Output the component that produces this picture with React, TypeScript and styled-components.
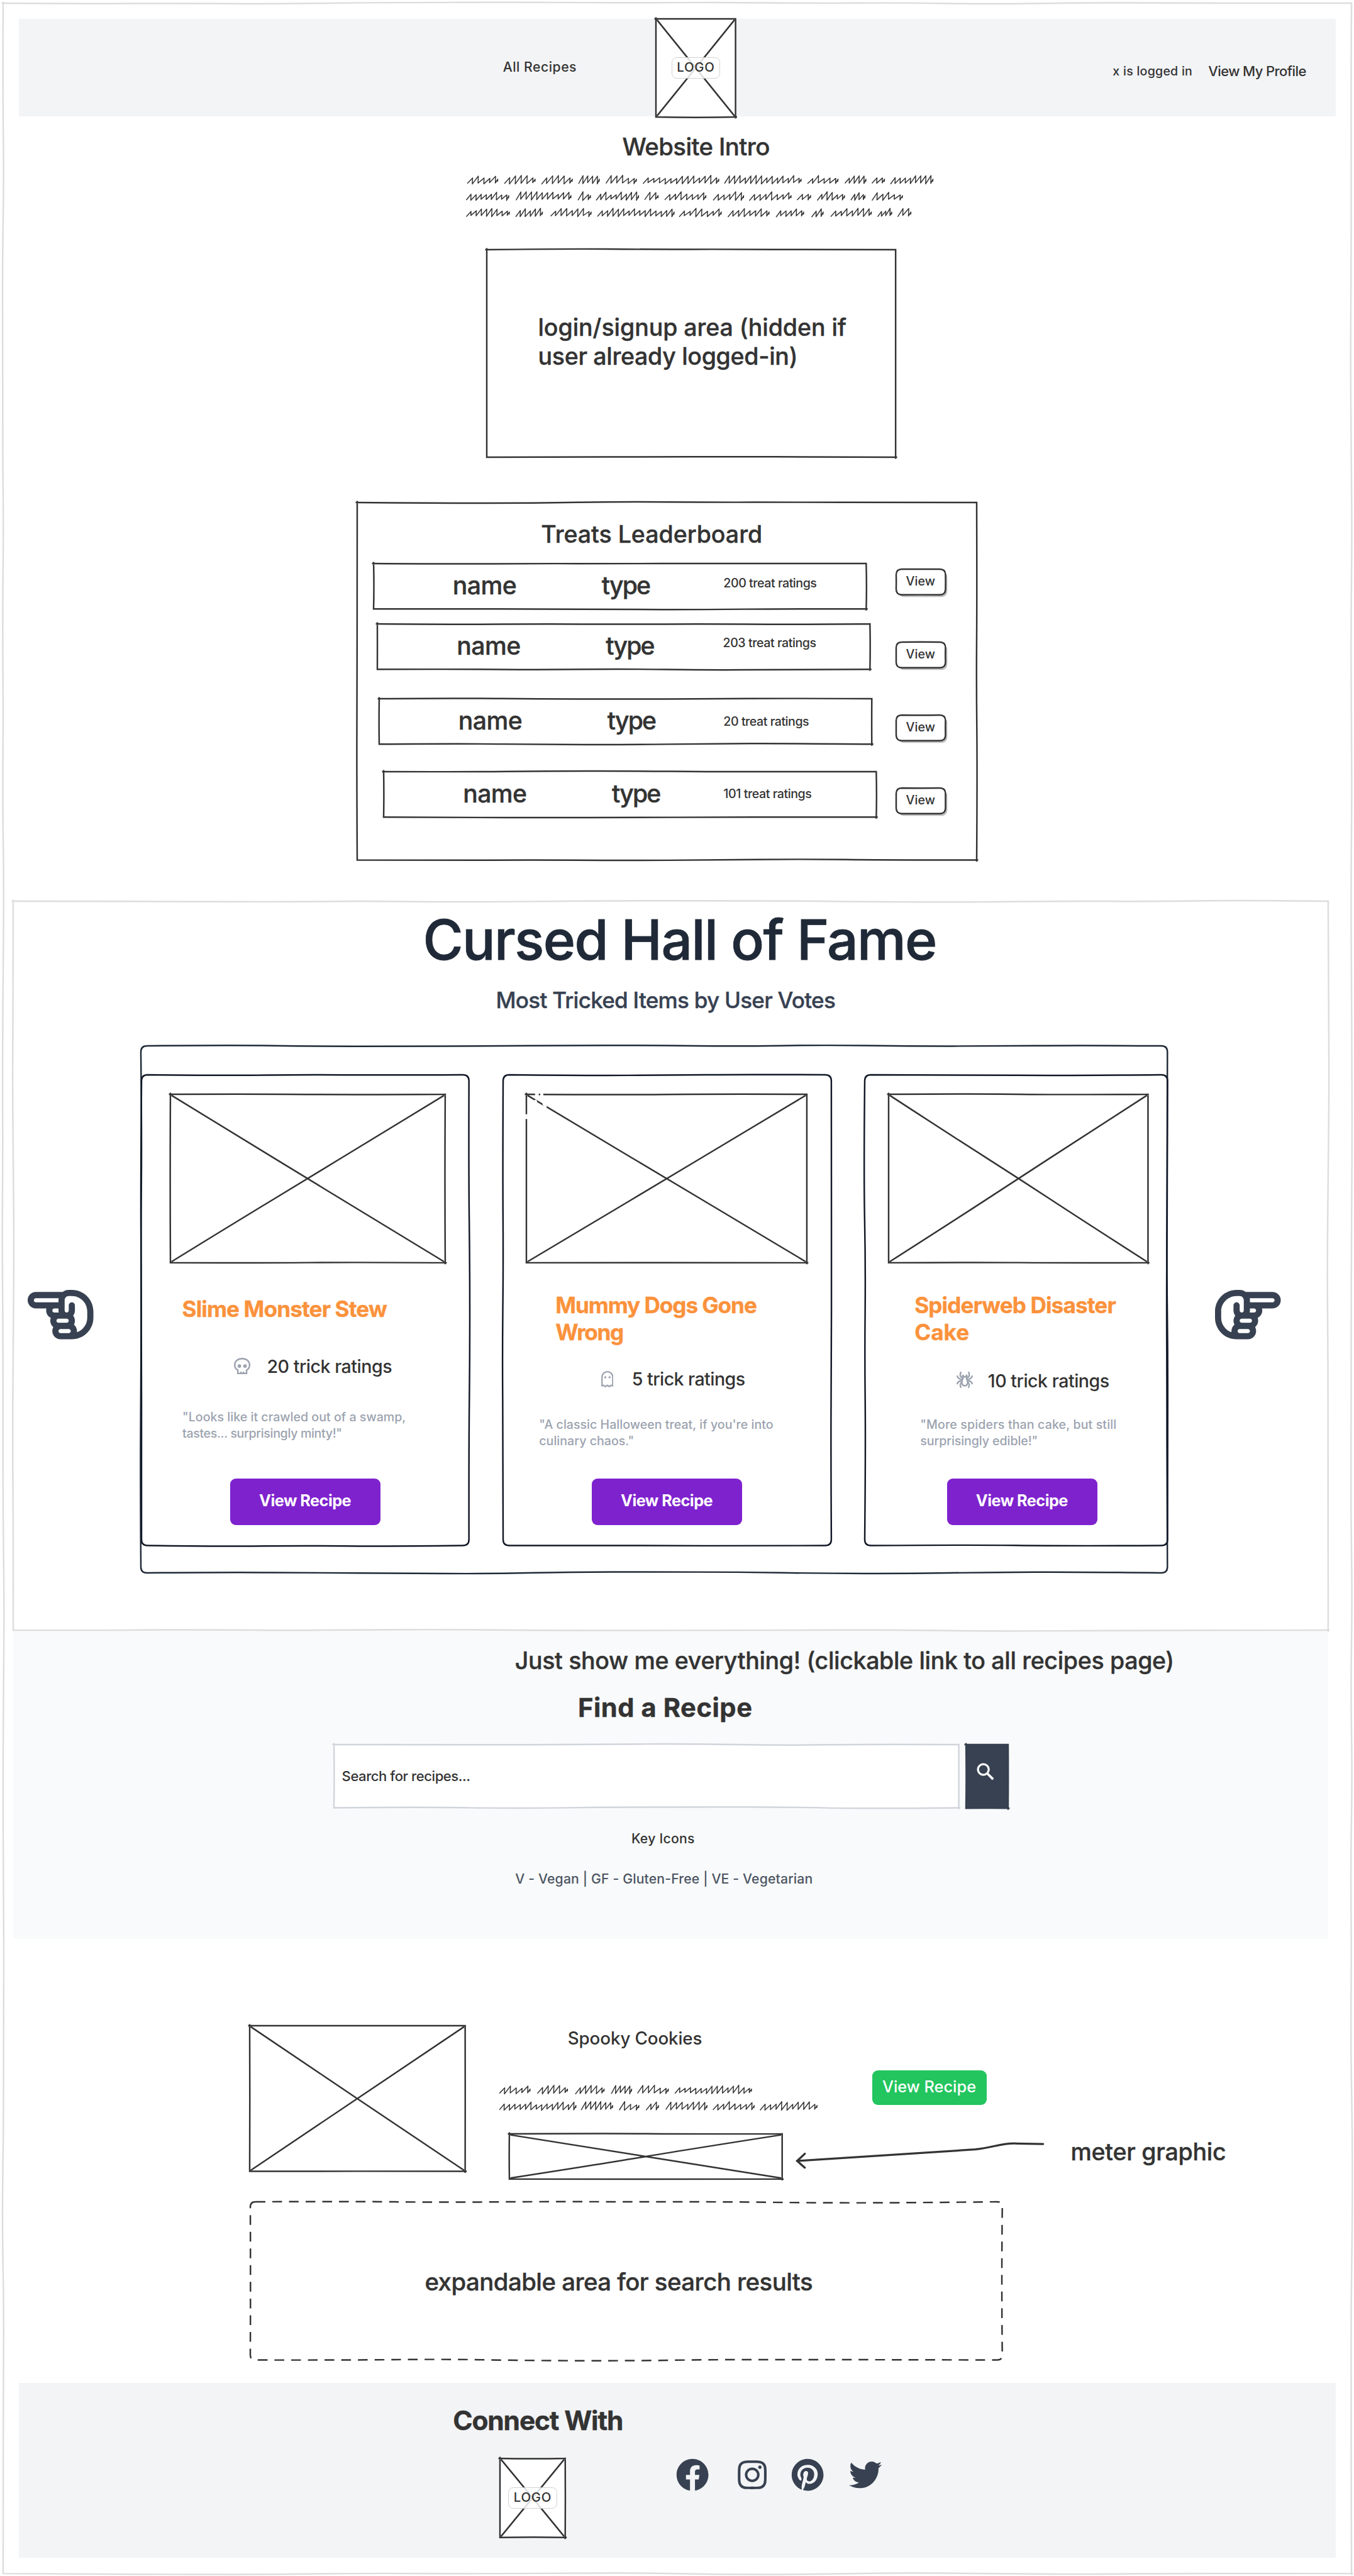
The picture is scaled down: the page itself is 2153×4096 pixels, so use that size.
import React, { useLayoutEffect, useRef, useState } from 'react';
import styled, { createGlobalStyle, css } from 'styled-components';
import { FaFacebook, FaInstagram, FaPinterest, FaTwitter } from 'react-icons/fa';
import { FaRegHandPointLeft, FaRegHandPointRight } from 'react-icons/fa6';

const INK = '#333333';
const NAVY = '#1f2937';
const SLATE = '#374151';

/* One rem is ten design units. */
const u = (n: number) => `${n / 10}rem`;

const GlobalStyle = createGlobalStyle`
  html { font-size: 8.1677px; background: #fff; }
  body { margin: 0; font-family: Inter, "Liberation Sans", sans-serif; color: ${INK}; }
  *, *::before, *::after { box-sizing: border-box; }
`;

/* ---------- hand-drawn strokes ---------- */

type Pt = [number, number];

const noise = (seed: number, i: number) => {
  const v = Math.sin(seed * 12.9898 + i * 78.233) * 43758.5453;
  return v - Math.floor(v) - 0.5;
};

const wobble = (a: Pt, b: Pt, seed: number, amp: number): string => {
  const dx = b[0] - a[0];
  const dy = b[1] - a[1];
  const len = Math.hypot(dx, dy) || 1;
  const n = Math.max(2, Math.round(len / 170));
  const pts: Pt[] = [];
  for (let i = 1; i < n; i++) {
    const o = noise(seed, i) * 2 * amp;
    pts.push([a[0] + (dx * i) / n - (dy / len) * o, a[1] + (dy * i) / n + (dx / len) * o]);
  }
  pts.push(b);
  let d = '';
  for (let i = 0; i < pts.length - 1; i++) {
    const p = pts[i];
    const q = pts[i + 1];
    const last = i === pts.length - 2;
    const e: Pt = last ? q : [(p[0] + q[0]) / 2, (p[1] + q[1]) / 2];
    d += `Q${p[0].toFixed(1)} ${p[1].toFixed(1)} ${e[0].toFixed(1)} ${e[1].toFixed(1)}`;
  }
  return d;
};

const Strokes = styled.svg`
  position: absolute;
  inset: 0;
  width: 100%;
  height: 100%;
  overflow: visible;
  pointer-events: none;
  fill: none;
`;

interface SketchProps {
  w: number;
  h: number;
  seed?: number;
  color?: string;
  sw?: number;
  r?: number;
  amp?: number;
  over?: number;
  dash?: string;
  cross?: boolean;
}

const Sketch = ({ w, h, seed = 1, color = INK, sw = 3, r = 0, amp = 2, over = 3, dash, cross }: SketchProps) => {
  let d: string;
  if (r > 0) {
    d =
      `M${r} 0` + wobble([r, 0], [w - r, 0], seed, amp) +
      `Q${w} 0 ${w} ${r}` + wobble([w, r], [w, h - r], seed + 1, amp) +
      `Q${w} ${h} ${w - r} ${h}` + wobble([w - r, h], [r, h], seed + 2, amp) +
      `Q0 ${h} 0 ${h - r}` + wobble([0, h - r], [0, r], seed + 3, amp) +
      `Q0 0 ${r} 0`;
  } else {
    d =
      `M${-over} 0` + wobble([-over, 0], [w + over / 2, 0], seed, amp) +
      `M${w} ${-over / 2}` + wobble([w, -over / 2], [w, h + over], seed + 1, amp) +
      `M${w + over} ${h}` + wobble([w + over, h], [-over / 2, h], seed + 2, amp) +
      `M0 ${h + over / 2}` + wobble([0, h + over / 2], [0, -over], seed + 3, amp);
  }
  return (
    <Strokes viewBox={`0 0 ${w} ${h}`} preserveAspectRatio="none">
      <path d={d} stroke={color} strokeWidth={sw} strokeDasharray={dash} strokeLinecap="butt" />
      {cross && (
        <path
          d={`M2 2${wobble([2, 2], [w - 2, h - 2], seed + 4, 0.8)}M2 ${h - 2}${wobble([2, h - 2], [w - 2, 2], seed + 5, 0.8)}`}
          stroke={color}
          strokeWidth={sw}
        />
      )}
    </Strokes>
  );
};

const ScribbleArt = styled.svg<{ $w: number; $h: number; $mt: number; $ml: number }>`
  display: block;
  width: ${(p) => u(p.$w)};
  height: ${(p) => u(p.$h)};
  margin: ${(p) => u(p.$mt)} 0 0 ${(p) => u(p.$ml)};
  fill: none;
  stroke: ${INK};
  stroke-width: 1.8;
  stroke-linejoin: round;
`;

const scribbleWord = (x0: number, x1: number, cy: number, seed: number) => {
  const n = Math.max(2, Math.round((x1 - x0) / 11));
  const step = (x1 - x0) / (n + 0.3);
  let d = `M${x0.toFixed(1)} ${(cy + 6 + noise(seed, 50) * 2).toFixed(1)}`;
  for (let i = 0; i < n; i++) {
    const tall = noise(seed, i) > 0;
    const topY = cy - (tall ? 9.5 : 5) + noise(seed, i + 20) * 2;
    const lowY = cy + 5 + noise(seed, i + 40) * 3;
    const tx = x0 + step * (i + 0.92);
    const bx = x0 + step * (i + 0.82) + 0.5;
    d += `L${tx.toFixed(1)} ${topY.toFixed(1)}L${bx.toFixed(1)} ${lowY.toFixed(1)}`;
  }
  d += `L${x1.toFixed(1)} ${cy - 3}L${(x1 - 0.5).toFixed(1)} ${cy + 2}`;
  return d;
};

interface ScribbleProps {
  w: number;
  h: number;
  mt: number;
  ml: number;
  scale: number;
  shift: number;
  lines: { y: number; words: Pt[] }[];
}

const Scribble = ({ w, h, mt, ml, scale, shift, lines }: ScribbleProps) => (
  <ScribbleArt $w={w} $h={h} $mt={mt} $ml={ml} viewBox={`0 0 ${w} ${h}`}>
    {lines.map((l, li) => (
      <path
        key={li}
        d={l.words.map(([a, b], i) => scribbleWord((a - shift) * scale, (b - shift) * scale, l.y, li * 31 + i * 3 + 2)).join('')}
      />
    ))}
  </ScribbleArt>
);

/* ---------- text ---------- */

interface LineStyle {
  $size: number;
  $lh: number;
  $w?: number;
  $weight?: number;
  $color?: string;
  $mt?: number;
  $ml?: number;
}

const Line = styled.div<LineStyle>`
  flex: none;
  width: ${(p) => (p.$w ? u(p.$w) : 'auto')};
  margin-top: ${(p) => u(p.$mt ?? 0)};
  margin-left: ${(p) => u(p.$ml ?? 0)};
  font-size: ${(p) => u(p.$size)};
  line-height: ${(p) => u(p.$lh)};
  font-weight: ${(p) => p.$weight ?? 500};
  color: ${(p) => p.$color ?? INK};
  white-space: nowrap;
  transform: translateY(0.08rem);
  -webkit-text-stroke: ${(p) => (p.$size >= 40 ? '0.01em' : '0')} currentColor;
  stroke-linejoin: round;
`;

interface TextProps {
  children: string;
  size: number;
  lh: number;
  w: number;
  weight?: number;
  color?: string;
  mt?: number;
  ml?: number;
}

/* Tracks the letters so that the line takes its drawn width, side bearings included. */
const Text = ({ children, size, lh, w, weight, color, mt, ml }: TextProps) => {
  const ref = useRef<HTMLSpanElement>(null);
  const [tracking, setTracking] = useState(0);
  const full = w + size * 0.08;
  useLayoutEffect(() => {
    const el = ref.current;
    if (!el) return;
    const root = parseFloat(getComputedStyle(document.documentElement).fontSize);
    el.style.letterSpacing = '0px';
    const natural = el.getBoundingClientRect().width;
    setTracking(((full / 10) * root - natural) / Math.max(1, children.length - 1));
  }, [children, full]);
  return (
    <Line $size={size} $lh={lh} $w={full} $weight={weight} $color={color} $mt={mt} $ml={(ml ?? 0) - size * 0.035}>
      <span ref={ref} style={{ letterSpacing: `${tracking}px` }}>{children}</span>
    </Line>
  );
};

/* ---------- page shell ---------- */

const Page = styled.div`
  position: relative;
  display: flex;
  flex-direction: column;
  width: 263.6rem;
  height: 501.5rem;
  overflow: hidden;
  background: #fff;
`;

const PageEdge = styled.div`
  position: absolute;
  left: 0.6rem;
  top: 0.6rem;
  width: 262.5rem;
  height: 500.4rem;
  pointer-events: none;
`;

const Header = styled.header`
  flex: none;
  display: flex;
  align-items: flex-start;
  width: 256.3rem;
  height: 19rem;
  margin: 3.7rem 0 0 3.7rem;
  background: #f3f4f6;
`;

const LogoBox = styled.div<{ $w: number; $h: number; $ml: number }>`
  position: relative;
  flex: none;
  display: flex;
  align-items: center;
  justify-content: center;
  width: ${(p) => u(p.$w)};
  height: ${(p) => u(p.$h)};
  margin-left: ${(p) => u(p.$ml)};
  background: #fff;
`;

const LogoLabel = styled.div`
  position: relative;
  display: flex;
  justify-content: center;
  width: 9.5rem;
  height: 4.1rem;
  border: 0.2rem solid #d2d2d2;
  border-radius: 1rem;
  background: rgba(255, 255, 255, 0.84);
`;

const Logo = ({ w, h, ml, seed }: { w: number; h: number; ml: number; seed: number }) => (
  <LogoBox $w={w} $h={h} $ml={ml}>
    <Sketch w={w} h={h} seed={seed} cross />
    <LogoLabel>
      <Text size={25} lh={34} w={71} weight={500}>LOGO</Text>
    </LogoLabel>
  </LogoBox>
);

const Intro = styled.section`
  flex: none;
  height: 25.9rem;
  padding-top: 3rem;
`;

const LoginArea = styled.section`
  position: relative;
  flex: none;
  width: 79.6rem;
  height: 40.4rem;
  margin-left: 94.8rem;
  padding: 12.2rem 0 0 10.1rem;
`;

/* ---------- leaderboard ---------- */

const Board = styled.section`
  position: relative;
  flex: none;
  width: 120.6rem;
  height: 69.6rem;
  margin: 8.8rem 0 0 69.6rem;
  padding-top: 3.3rem;
`;

const BoardRows = styled.div`
  margin-top: 3rem;
`;

const BoardRow = styled.div<{ $h: number; $ml: number }>`
  display: flex;
  align-items: flex-start;
  height: ${(p) => u(p.$h)};
  padding-left: ${(p) => u(p.$ml)};
`;

const Entry = styled.div`
  position: relative;
  flex: none;
  display: flex;
  align-items: flex-start;
  width: 95.9rem;
  height: 8.85rem;
`;

const ViewButton = styled.button<{ $mt: number; $ml: number }>`
  position: relative;
  flex: none;
  display: flex;
  justify-content: center;
  width: 9.6rem;
  height: 5rem;
  margin: ${(p) => u(p.$mt)} 0 0 ${(p) => u(p.$ml)};
  padding: 0;
  border: 0;
  border-radius: 1.1rem;
  background: #fff;
  box-shadow: 0.4rem 0.4rem 0 #bdbdbd;
  font-family: inherit;
`;

const entries = [
  { x: 31, h: 118, view: 12, count: '200 treat ratings', cw: 180, cx: 681, clh: 74 },
  { x: 39, h: 145, view: 36, count: '203 treat ratings', cw: 180, cx: 672, clh: 72 },
  { x: 42, h: 142, view: 33, count: '20 treat ratings', cw: 165, cx: 670, clh: 86 },
  { x: 51, h: 142, view: 33, count: '101 treat ratings', cw: 170, cx: 661, clh: 84 },
];

const Leaderboard = () => (
  <Board>
    <Sketch w={1206} h={696} seed={14} />
    <Text size={46} lh={56} w={427} ml={359}>Treats Leaderboard</Text>
    <BoardRows>
      {entries.map((e, i) => (
        <BoardRow key={e.count} $h={e.h} $ml={e.x}>
          <Entry>
            <Sketch w={959} h={88.5} seed={21 + i * 7} amp={1.5} />
            <Text size={48} lh={83} w={121} ml={156}>name</Text>
            <Text size={48} lh={83} w={92} ml={167}>type</Text>
            <Text size={24} lh={e.clh} w={e.cw} ml={e.cx - 539}>{e.count}</Text>
          </Entry>
          <ViewButton $mt={e.view - 1} $ml={1048.5 - e.x - 959}>
            <Sketch w={96} h={50} r={11} amp={0.8} seed={i + 3} />
            <Text size={24} lh={46} w={55}>View</Text>
          </ViewButton>
        </BoardRow>
      ))}
    </BoardRows>
  </Board>
);

/* ---------- hall of fame ---------- */

const Hall = styled.section`
  position: relative;
  flex: none;
  width: 256rem;
  height: 141.9rem;
  margin: 8.1rem 0 0 2.6rem;
  padding-top: 1.3rem;
`;

const CarouselRow = styled.div`
  display: flex;
  align-items: flex-start;
  margin-top: 6.5rem;
`;

const ArrowButton = styled.button<{ $ml: number }>`
  flex: none;
  display: block;
  margin: 45.9rem 0 0 ${(p) => u(p.$ml)};
  padding: 0;
  border: 0;
  background: none;
  color: ${SLATE};
  font-size: 12.8rem;
  line-height: 0;
`;

const Carousel = styled.div`
  position: relative;
  flex: none;
  display: flex;
  gap: 6.55rem;
  width: 199.85rem;
  height: 102.6rem;
  margin-left: 9.25rem;
  padding: 5.6rem 0 0 0.15rem;
`;

const CardBox = styled.article<{ $w: number }>`
  position: relative;
  flex: none;
  width: ${(p) => u(p.$w)};
  height: 91.65rem;
  padding-top: 3.9rem;
`;

const Photo = styled.div<{ $w: number; $h: number; $ml?: number }>`
  position: relative;
  flex: none;
  width: ${(p) => u(p.$w)};
  height: ${(p) => u(p.$h)};
  margin-left: ${(p) => u(p.$ml ?? 0)};
`;

const RatingRow = styled.div<{ $mt: number; $ml: number; $gap: number }>`
  display: flex;
  align-items: center;
  gap: ${(p) => u(p.$gap)};
  height: 4rem;
  margin: ${(p) => u(p.$mt)} 0 0 ${(p) => u(p.$ml)};
`;

const Glyph = styled.svg<{ $w: number; $drop: number }>`
  flex: none;
  display: block;
  width: ${(p) => u(p.$w)};
  height: 3.2rem;
  margin-top: ${(p) => u(p.$drop)};
  fill: none;
  stroke: #9ca3af;
  stroke-width: 3;
  stroke-linecap: round;
  stroke-linejoin: round;
`;

const buttonFill = css<{ $color: string }>`
  display: flex;
  justify-content: center;
  padding: 0;
  border: 0;
  background: ${(p) => p.$color};
  font-family: inherit;
`;

const RecipeButton = styled.button<{ $color: string; $w: number; $h: number; $mt: number; $ml: number }>`
  ${buttonFill}
  flex: none;
  width: ${(p) => u(p.$w)};
  height: ${(p) => u(p.$h)};
  margin: ${(p) => u(p.$mt)} 0 0 ${(p) => u(p.$ml)};
  border-radius: 1.1rem;
`;

const Skull = () => (
  <Glyph $w={32} $drop={-2} viewBox="0 0 32 32">
    <path d="M16 1.5C7.5 1.5 1.5 6.8 1.5 13.8C1.5 18.4 4 22 7.5 24V30.5H24.6V24C28 22 30.5 18.4 30.5 13.8C30.5 6.8 24.5 1.5 16 1.5Z" />
    <path d="M13.7 28v2.5M18.5 28v2.5" />
    <circle cx="10.6" cy="16" r="3.5" fill="#9ca3af" stroke="none" />
    <circle cx="21.6" cy="16" r="3.5" fill="#9ca3af" stroke="none" />
  </Glyph>
);

const Ghost = () => (
  <Glyph $w={24} $drop={2} viewBox="0 0 24 32">
    <path d="M12 1.5C6 1.5 1.5 6 1.5 12V29L4.7 27.8L8 30.4L12 27.8L16 30.4L19.3 27.8L22.5 29V12C22.5 6 18 1.5 12 1.5Z" strokeWidth="2.8" />
    <circle cx="8" cy="12.2" r="2.1" fill="#9ca3af" stroke="none" />
    <circle cx="16.2" cy="12.2" r="2.1" fill="#9ca3af" stroke="none" />
  </Glyph>
);

const Spider = () => (
  <Glyph $w={32} $drop={-2} viewBox="0 0 32 32">
    <path d="M12.2 8V14C10.8 15.6 10 17.6 10 20.3C10 24.6 12.4 27.5 16 27.5C19.6 27.5 22 24.6 22 20.3C22 17.6 21.2 15.6 19.8 14V8" strokeWidth="3.2" />
    <path d="M12.3 7L14 10H18L19.7 7" />
    <path d="M12.2 12.5C7.8 11 5.8 8 8.2 1.5M19.8 12.5C24.2 11 26.2 8 23.8 1.5" />
    <path d="M11.5 15.5C6.5 15.6 3.6 14 1.5 8.8M20.5 15.5C25.5 15.6 28.4 14 30.5 8.8" />
    <path d="M10.5 18.5C5.8 17.8 2.8 19.2 1.5 23.4M21.5 18.5C26.2 17.8 29.2 19.2 30.5 23.4" />
    <path d="M10.5 21.5C7.2 22.5 6.2 25.4 8.3 30.5M21.5 21.5C24.8 22.5 25.8 25.4 23.7 30.5" />
  </Glyph>
);

const CornerMarks = () => (
  <Strokes viewBox="0 0 546 328" preserveAspectRatio="none">
    <path d="M17 0H24M27 0H33M0 39V48M15 15L20 12M33 17L38 26" stroke="#fff" strokeWidth="5" />
  </Strokes>
);

type Copy = { t: string; w: number };

interface CardData {
  w: number;
  photo: { w: number; ml: number };
  title: { mt: number; ml: number; lines: Copy[] };
  rating: { mt: number; ml: number; gap: number; t: string; w: number; icon: React.ReactNode };
  quote: { mt: number; ml: number; lines: Copy[] };
  button: { mt: number; ml: number };
  marks?: boolean;
}

const cards: CardData[] = [
  {
    w: 637.5,
    photo: { w: 535, ml: 56 },
    title: { mt: 62.5, ml: 80, lines: [{ t: 'Slime Monster Stew', w: 396 }] },
    rating: { mt: 65.5, ml: 180, gap: 33, t: '20 trick ratings', w: 241, icon: <Skull /> },
    quote: {
      mt: 61,
      ml: 80,
      lines: [{ t: '"Looks like it crawled out of a swamp,', w: 433 }, { t: 'tastes... surprisingly minty!"', w: 309 }],
    },
    button: { mt: 74, ml: 172 },
  },
  {
    w: 639,
    photo: { w: 546, ml: 46 },
    title: { mt: 54.5, ml: 104, lines: [{ t: 'Mummy Dogs Gone', w: 389 }, { t: 'Wrong', w: 130 }] },
    rating: { mt: 44.5, ml: 191, gap: 37.5, t: '5 trick ratings', w: 218, icon: <Ghost /> },
    quote: {
      mt: 52,
      ml: 71.5,
      lines: [{ t: '"A classic Halloween treat, if you\'re into', w: 454 }, { t: 'culinary chaos."', w: 183 }],
    },
    button: { mt: 59, ml: 173 },
    marks: true,
  },
  {
    w: 589.5,
    photo: { w: 505, ml: 46 },
    title: { mt: 54.5, ml: 98.5, lines: [{ t: 'Spiderweb Disaster', w: 389 }, { t: 'Cake', w: 103 }] },
    rating: { mt: 48.5, ml: 178.5, gap: 30.5, t: '10 trick ratings', w: 234, icon: <Spider /> },
    quote: {
      mt: 48,
      ml: 109,
      lines: [{ t: '"More spiders than cake, but still', w: 380 }, { t: 'surprisingly edible!"', w: 227 }],
    },
    button: { mt: 59, ml: 160 },
  },
];

const RecipeCard = ({ c, i }: { c: CardData; i: number }) => (
  <CardBox $w={c.w}>
    <Sketch w={c.w} h={916.5} r={12} seed={41 + i * 9} color="#111827" />
    <Photo $w={c.photo.w} $h={328} $ml={c.photo.ml}>
      <Sketch w={c.photo.w} h={328} seed={61 + i * 6} amp={1.2} cross />
      {c.marks && <CornerMarks />}
    </Photo>
    {c.title.lines.map((l, n) => (
      <Text key={l.t} size={43} lh={53} w={l.w} weight={700} color="#fb923c" mt={n ? 0 : c.title.mt} ml={c.title.ml}>
        {l.t}
      </Text>
    ))}
    <RatingRow $mt={c.rating.mt} $ml={c.rating.ml} $gap={c.rating.gap}>
      {c.rating.icon}
      <Text size={35} lh={40} w={c.rating.w}>{c.rating.t}</Text>
    </RatingRow>
    {c.quote.lines.map((l, n) => (
      <Text key={l.t} size={24} lh={32} w={l.w} color="#9ca3af" mt={n ? 0 : c.quote.mt} ml={c.quote.ml}>
        {l.t}
      </Text>
    ))}
    <RecipeButton $color="#7e22ce" $w={293} $h={90} $mt={c.button.mt} $ml={c.button.ml}>
      <Text size={31} lh={84} w={177} weight={700} color="#fff">View Recipe</Text>
    </RecipeButton>
  </CardBox>
);

/* ---------- search ---------- */

const Finder = styled.section`
  flex: none;
  width: 256rem;
  height: 60.1rem;
  margin-left: 2.6rem;
  padding-top: 3rem;
  background: #f9fafb;
`;

const SearchRow = styled.div`
  display: flex;
  align-items: flex-start;
  gap: 1.3rem;
  margin: 4.3rem 0 0 62.45rem;
`;

const SearchField = styled.div`
  position: relative;
  width: 121.65rem;
  height: 12.3rem;
  padding-left: 1.6rem;
  background: #fff;
`;

const SearchButton = styled.button`
  position: relative;
  display: flex;
  align-items: flex-start;
  width: 8.2rem;
  height: 12.4rem;
  padding: 3.6rem 0 0 2.1rem;
  border: 0;
  background: ${SLATE};
`;

const Lens = styled.svg`
  display: block;
  width: 3.4rem;
  height: 3.4rem;
  fill: none;
  stroke: #fff;
  stroke-width: 4;
`;

/* ---------- results ---------- */

const ResultRow = styled.section`
  flex: none;
  display: flex;
  height: 29.8rem;
  margin: 16.9rem 0 0 48.55rem;
`;

const ResultBody = styled.div`
  display: flex;
  flex-direction: column;
`;

const ResultTop = styled.div`
  display: flex;
  align-items: flex-start;
  height: 21rem;
`;

const ResultCopy = styled.div`
  width: 70rem;
  padding-left: 6.75rem;
`;

const ResultMeter = styled.div`
  display: flex;
  align-items: flex-start;
`;

const Pointer = styled.svg`
  flex: none;
  display: block;
  width: 48.5rem;
  height: 5.6rem;
  margin: 1.5rem 0 0 2.6rem;
  overflow: visible;
  fill: none;
  stroke: ${INK};
  stroke-width: 4;
  stroke-linecap: round;
`;

const ExpandArea = styled.section`
  position: relative;
  flex: none;
  display: flex;
  align-items: center;
  width: 146.4rem;
  height: 30.8rem;
  margin: 4.5rem 0 0 48.7rem;
`;

const Footer = styled.footer`
  flex: none;
  width: 256.3rem;
  height: 34.1rem;
  margin: 4.4rem 0 0 3.7rem;
  padding-top: 4.2rem;
  background: #f3f4f6;
`;

const FooterRow = styled.div`
  display: flex;
  align-items: flex-start;
  margin-top: 4.5rem;
`;

const Social = styled.a<{ $ml: number }>`
  flex: none;
  display: flex;
  width: 6.4rem;
  height: 6.4rem;
  margin-left: ${(p) => u(p.$ml)};
  color: ${SLATE};
  font-size: 6.4rem;
`;

const introLines: { y: number; words: Pt[] }[] = [
  { y: 31, words: [[48, 145], [166, 264], [284, 382], [402, 468], [489, 586], [607, 848], [866, 1110], [1130, 1227], [1249, 1316], [1335, 1375], [1394, 1529]] },
  { y: 63, words: [[45, 180], [203, 378], [400, 440], [458, 593], [612, 655], [676, 807], [830, 927], [945, 1078], [1097, 1140], [1161, 1248], [1268, 1313], [1335, 1432]] },
  { y: 95, words: [[45, 182], [202, 287], [313, 442], [462, 706], [722, 856], [877, 1008], [1030, 1118], [1143, 1180], [1204, 1333], [1353, 1398], [1417, 1459]] },
];

const resultLines: { y: number; words: Pt[] }[] = [
  { y: 21, words: [[402, 449], [460, 506], [518, 562], [573, 604], [613, 660], [670, 787]] },
  { y: 53, words: [[402, 519], [527, 575], [585, 615], [626, 645], [656, 719], [728, 791], [800, 887]] },
];

export default function App() {
  return (
    <>
      <GlobalStyle />
      <Page>
        <PageEdge>
          <Sketch w={2625} h={5004} seed={5} color="#dddddd" />
        </PageEdge>

        <Header>
          <Text size={26} lh={40} w={141} mt={72} ml={943}>All Recipes</Text>
          <Logo w={155} h={191} ml={155} seed={8} />
          <Text size={24} lh={40} w={153} mt={80} ml={735}>x is logged in</Text>
          <Text size={27} lh={40} w={189} mt={81} ml={32}>View My Profile</Text>
        </Header>

        <Intro>
          <Text size={47} lh={56} w={284} ml={1213}>Website Intro</Text>
          <Scribble w={960} h={120} mt={8} ml={880} scale={0.6122} shift={0} lines={introLines} />
        </Intro>

        <LoginArea>
          <Sketch w={796} h={404} seed={10} />
          <Text size={46} lh={57} w={597}>login/signup area (hidden if</Text>
          <Text size={46} lh={57} w={502}>user already logged-in)</Text>
        </LoginArea>

        <Leaderboard />

        <Hall>
          <Sketch w={2560} h={1419} seed={31} color="#dddddd" />
          <Text size={107} lh={120} w={993} ml={801} color={NAVY}>Cursed Hall of Fame</Text>
          <Text size={43} lh={50} w={658} mt={33} ml={941} color={SLATE}>Most Tricked Items by User Votes</Text>
          <CarouselRow>
            <ArrowButton $ml={28} aria-label="Previous"><FaRegHandPointLeft /></ArrowButton>
            <Carousel>
              <Sketch w={1998.5} h={1026} r={12} seed={35} color={NAVY} />
              {cards.map((c, i) => <RecipeCard key={i} c={c} i={i} />)}
            </Carousel>
            <ArrowButton $ml={93} aria-label="Next"><FaRegHandPointRight /></ArrowButton>
          </CarouselRow>
        </Hall>

        <Finder>
          <Text size={46} lh={56} w={1280} ml={978}>Just show me everything! (clickable link to all recipes page)</Text>
          <Text size={51} lh={60} w={335} mt={33.5} ml={1101} weight={700}>Find a Recipe</Text>
          <SearchRow>
            <SearchField>
              <Sketch w={1216.5} h={123} seed={71} color="#d1d5db" />
              <Text size={27} lh={121} w={248}>Search for recipes...</Text>
            </SearchField>
            <SearchButton aria-label="Search">
              <Sketch w={82} h={124} seed={75} color={SLATE} amp={1} />
              <Lens viewBox="0 0 34 34">
                <circle cx="13" cy="13" r="10.5" />
                <path d="M20.5 20.5L32 32" strokeWidth="4.6" />
              </Lens>
            </SearchButton>
          </SearchRow>
          <Text size={26} lh={40} w={121} mt={38} ml={1204}>Key Icons</Text>
          <Text size={26} lh={40} w={577} mt={38} ml={978} color="#4b5563">V - Vegan | GF - Gluten-Free | VE - Vegetarian</Text>
        </Finder>

        <ResultRow>
          <Photo $w={419.5} $h={283.5}>
            <Sketch w={419.5} h={283.5} seed={81} amp={1.2} cross />
          </Photo>
          <ResultBody>
            <ResultTop>
              <ResultCopy>
                <Text size={34} lh={40} w={259} mt={3} ml={134}>Spooky Cookies</Text>
                <Scribble w={640} h={76} mt={62} ml={0} scale={1.2755} shift={402} lines={resultLines} />
              </ResultCopy>
              <RecipeButton $color="#22c55e" $w={222} $h={67} $mt={87} $ml={93.5}>
                <Text size={31} lh={62} w={180} weight={500} color="#fff">View Recipe</Text>
              </RecipeButton>
            </ResultTop>
            <ResultMeter>
              <Photo $w={531} $h={88} $ml={87}>
                <Sketch w={531} h={88} seed={87} amp={1.2} cross />
              </Photo>
              <Pointer viewBox="0 0 485 56">
                <path d="M4 38L350 15.5C385 12 400 3 430 4L482 5" />
                <path d="M18 24L3 38L18 51" />
              </Pointer>
              <Text size={46} lh={56} w={299} mt={6} ml={52}>meter graphic</Text>
            </ResultMeter>
          </ResultBody>
        </ResultRow>

        <ExpandArea>
          <Sketch w={1464} h={308} r={10} seed={91} dash="19 13.5" />
          <Text size={47} lh={60} w={752} ml={341.6}>expandable area for search results</Text>
        </ExpandArea>

        <Footer>
          <Text size={52} lh={60} w={328} ml={846.5} weight={700}>Connect With</Text>
          <FooterRow>
            <Logo w={127} h={154} ml={936.5} seed={95} />
            <Social $ml={216}><FaFacebook /></Social>
            <Social $ml={51.5}><FaInstagram /></Social>
            <Social $ml={44}><FaPinterest /></Social>
            <Social $ml={49}><FaTwitter /></Social>
          </FooterRow>
        </Footer>
      </Page>
    </>
  );
}
